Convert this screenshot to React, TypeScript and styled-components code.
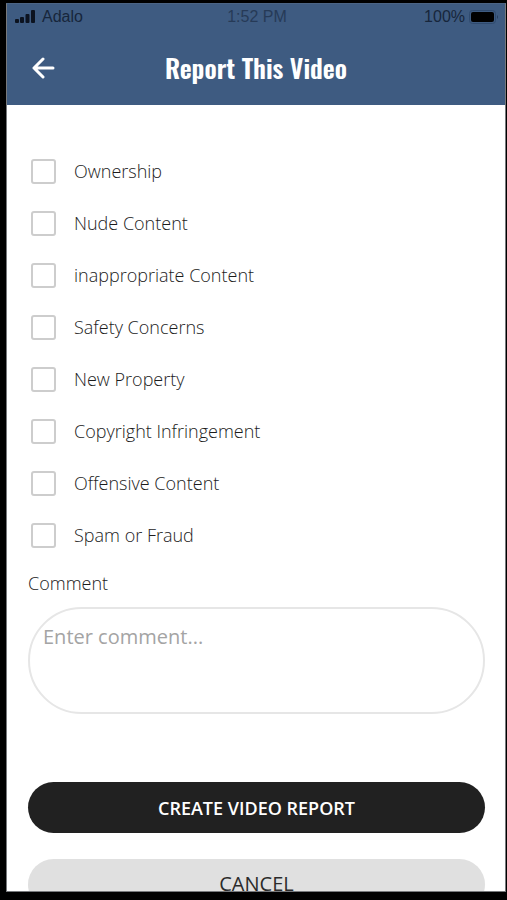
import React from "react";
import styled, { createGlobalStyle } from "styled-components";

const GlobalStyle = createGlobalStyle`
  * { box-sizing: border-box; }
  body { margin: 0; background: #000; font-family: "Open Sans", "Noto Sans", sans-serif; }
  button, input, textarea { font-family: inherit; }
`;

const Frame = styled.div`
  display: flex;
  height: 100vh;
  padding: 3px 1px 8px 6px;
  background: #000;
`;

const Screen = styled.main`
  flex: 1;
  min-width: 0;
  display: flex;
  flex-direction: column;
  overflow: hidden;
  background: #fff;
  border: 1px solid #77797c;
  border-top-color: #4b6485;
`;

const Header = styled.header`
  flex: none;
  background: #3e5b81;
`;

const StatusBar = styled.div`
  display: grid;
  grid-template-columns: 1fr auto 1fr;
  align-items: center;
  height: 26px;
  padding: 0 6px 0 8px;
  color: #17263b;
  font: 16px/20px "Liberation Sans", Arial, sans-serif;
`;

const StatusGroup = styled.div<{ $end?: boolean }>`
  display: flex;
  align-items: center;
  gap: ${(p) => (p.$end ? 4 : 6)}px;
  justify-content: ${(p) => (p.$end ? "flex-end" : "flex-start")};
`;

const Clock = styled.time`
  color: #263a57;
`;

const TitleBar = styled.div`
  display: grid;
  grid-template-columns: 40px 1fr 40px;
  align-items: center;
  height: 75px;
  padding: 0 16px;
`;

const BackButton = styled.button`
  display: flex;
  align-items: center;
  justify-content: center;
  height: 40px;
  padding: 0;
  border: 0;
  background: none;
`;

const Title = styled.h1`
  margin: 0;
  text-align: center;
  white-space: nowrap;
  color: #fff;
  font: 600 26px/36px Oswald, "Liberation Sans Narrow", "Liberation Sans", sans-serif;
`;

const Form = styled.form`
  flex: 1;
  min-height: 0;
  overflow: hidden;
  padding: 40px 20px 0 21px;
`;

const Reasons = styled.fieldset`
  margin: 0;
  padding: 0 0 0 3px;
  border: 0;
`;

const Reason = styled.label`
  display: flex;
  align-items: center;
  gap: 18px;
  height: 52px;
  color: #1c1c1c;
  font-size: 18px;
  font-weight: 300;
  line-height: 24px;
`;

const Checkbox = styled.input`
  appearance: none;
  flex: none;
  width: 25px;
  height: 25px;
  margin: 0;
  border: 2px solid #cdcdcd;
  border-radius: 3px;
  background: #fff;
  &:checked { background: #3e5b81; }
`;

const FieldLabel = styled.label`
  display: block;
  margin-top: 10px;
  color: #1c1c1c;
  font-size: 18px;
  font-weight: 300;
  line-height: 24px;
`;

const Comment = styled.textarea`
  display: block;
  width: 100%;
  height: 107px;
  margin: 12px 0 68px;
  padding: 14px 13px;
  border: 2px solid #e6e6e6;
  border-radius: 54px;
  outline: 0;
  resize: none;
  overflow: hidden;
  color: #4a4a4a;
  font-size: 20px;
  line-height: 28px;
  &::placeholder { color: #a4a4a4; }
`;

const ActionButton = styled.button<{ $primary?: boolean }>`
  display: block;
  width: 100%;
  height: 51px;
  margin-bottom: 26px;
  padding: 0;
  border: 0;
  border-radius: 26px;
  background: ${(p) => (p.$primary ? "#212121" : "#e0e0e0")};
  color: ${(p) => (p.$primary ? "#fff" : "#2b2b2b")};
  font-size: ${(p) => (p.$primary ? 18 : 20)}px;
  font-weight: ${(p) => (p.$primary ? 600 : 400)};
  line-height: 24px;
`;

const CancelButton = styled(ActionButton)`
  padding-bottom: 2px;
`;

const reasons = [
  "Ownership",
  "Nude Content",
  "inappropriate Content",
  "Safety Concerns",
  "New Property",
  "Copyright Infringement",
  "Offensive Content",
  "Spam or Fraud",
];

const SignalIcon = () => (
  <svg width="21" height="14" viewBox="0 0 21 14" fill="#0c1320" aria-hidden="true">
    <rect x="0" y="9" width="4" height="4" rx="1" />
    <rect x="5" y="7" width="4" height="6" rx="1" />
    <rect x="10.500" y="4" width="4" height="9" rx="1" />
    <rect x="16" y="0" width="4" height="13" rx="1" />
  </svg>
);

const BatteryIcon = () => (
  <svg width="30" height="14" viewBox="0 0 30 14" aria-hidden="true">
    <rect x="0.500" y="0.500" width="26" height="13" rx="3" fill="none" stroke="#2f4a6e" />
    <rect x="2" y="2" width="23" height="10" rx="2" fill="#000" />
    <path d="M28 5q2 2 0 4z" fill="#263d5d" />
  </svg>
);

const BackIcon = () => (
  <svg width="24" height="22" viewBox="0 0 24 22" fill="none" stroke="#fff" strokeWidth="3" strokeLinecap="round" strokeLinejoin="round" aria-hidden="true">
    <path d="M22 11H3M12 2L3 11l9 9" />
  </svg>
);

export default function App() {
  return (
    <>
      <GlobalStyle />
      <Frame>
        <Screen>
          <Header>
            <StatusBar>
              <StatusGroup>
                <SignalIcon />
                <span>Adalo</span>
              </StatusGroup>
              <Clock>1:52 PM</Clock>
              <StatusGroup $end>
                <span>100%</span>
                <BatteryIcon />
              </StatusGroup>
            </StatusBar>
            <TitleBar>
              <BackButton type="button" aria-label="Back">
                <BackIcon />
              </BackButton>
              <Title>Report This Video</Title>
            </TitleBar>
          </Header>
          <Form onSubmit={(e) => e.preventDefault()}>
            <Reasons aria-label="Reasons">
              {reasons.map((reason) => (
                <Reason key={reason}>
                  <Checkbox type="checkbox" name="reason" value={reason} />
                  <span>{reason}</span>
                </Reason>
              ))}
            </Reasons>
            <FieldLabel htmlFor="comment">Comment</FieldLabel>
            <Comment id="comment" placeholder="Enter comment..." />
            <ActionButton type="submit" $primary>CREATE VIDEO REPORT</ActionButton>
            <CancelButton type="button">CANCEL</CancelButton>
          </Form>
        </Screen>
      </Frame>
    </>
  );
}
